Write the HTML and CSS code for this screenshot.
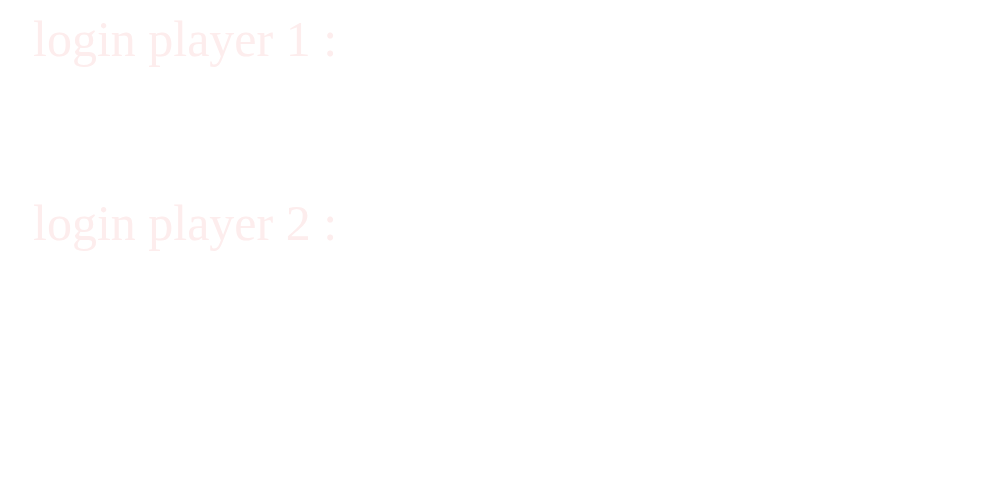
FILE: index.html
```html
<!DOCTYPE html>
<html lang="en">
<head>
<meta charset="utf-8">
<title>Login</title>
<link rel="stylesheet" href="styles.css">
</head>
<body>
  <main class="logins">
    <section class="player">
      <label class="player-label" for="p1">login player 1 :</label>
      <input class="player-input" id="p1" type="text">
    </section>
    <section class="player">
      <label class="player-label" for="p2">login player 2 :</label>
      <input class="player-input" id="p2" type="text">
    </section>
  </main>
</body>
</html>
```

FILE: styles.css
```css
html, body {
  margin: 0;
  padding: 0;
  background: #ffffff;
}

.logins {
  display: flex;
  flex-direction: column;
  padding: 11px 0 0 33px;
  font-family: "Liberation Serif", "Times New Roman", serif;
}

.player {
  display: flex;
  flex-direction: column;
  align-items: flex-start;
  height: 184px;
}

.player-label {
  font-size: 50px;
  line-height: 56px;
  color: #fdeded;
}

.player-input {
  border: none;
  background: transparent;
  outline: none;
  width: 300px;
  height: 40px;
  padding: 0;
  margin: 0;
}
```
